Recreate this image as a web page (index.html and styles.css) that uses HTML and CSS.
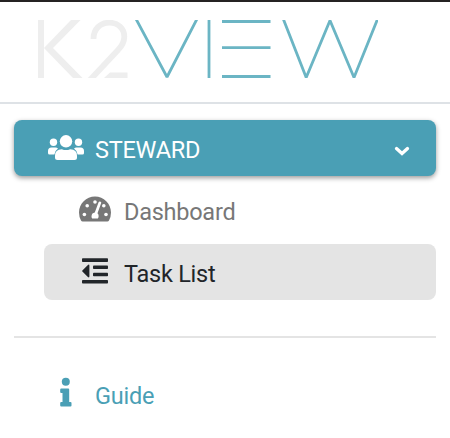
FILE: index.html
```html
<!DOCTYPE html>
<html lang="en">
<head>
<meta charset="utf-8">
<title>K2View</title>
<link rel="stylesheet" href="styles.css">
</head>
<body>
<header class="brand">
  <svg class="logo" viewBox="38 20 340 58" role="img" aria-label="K2View">
    <g fill="#eee">
      <path d="M38 20h6v58h-6z"/>
      <path d="M71 20h9.500L53 48 82.500 78h-9.500L44 48z"/>
      <path d="M110 72.500h17.500v5.500H104z"/>
    </g>
    <path d="M93.500 39C93.500 29 100 22.700 109.500 22.700C118 22.700 124.300 28.500 124.300 36.500C124.300 43 121.500 46.500 118 50L90 80" fill="none" stroke="#eee" stroke-width="5.800"/>
    <g fill="none" stroke="#6bb5c4" stroke-width="2.800">
      <path d="M135.500 18L167 77L197.500 18M209 20v58M222 21.500h48.500M222 47.700h48.500M222 76.500h48.500M282.900 18L306.200 77.500L330 20.500L354 77.500L378 18" stroke-linejoin="bevel"/>
    </g>
  </svg>
</header>
<nav class="menu">
  <a class="item group">
    <svg class="icon users" viewBox="0 0 36 26" fill="currentColor">
      <circle cx="5.500" cy="7.300" r="3.700"/><circle cx="30.500" cy="7.300" r="3.700"/><circle cx="18" cy="6.300" r="6.200"/>
      <path d="M3.500 12.500h4q1.500 0 2.500 1q-3 2-3.600 6H1.500Q0 19.500 0 18v-2q0-3.500 3.500-3.500zM32.500 12.500h-4q-1.500 0-2.500 1q3 2 3.600 6h4.900q1.500 0 1.500-1.500v-2q0-3.500-3.500-3.500z"/>
      <path d="M13.800 14.200q4.200 1.700 8.400 0q6.800 0 6.800 6.500v1.800q0 2.500-2.500 2.500h-17Q7 25 7 22.500v-1.800q0-6.500 6.800-6.500z"/>
    </svg>
    <span class="label">STEWARD</span>
    <svg class="chevron" viewBox="0 0 16 10"><path d="M2.500 2.500L8 7.500l5.500-5" fill="none" stroke="currentColor" stroke-width="3.300" stroke-linecap="round"/></svg>
  </a>
  <a class="item sub">
    <svg class="icon gauge" viewBox="0 0 32 26">
      <path d="M16 .4C7.200.4 0 7.500 0 16.400q0 4.300 2 8q.5 1 1.700 1h24.600q1.200 0 1.700-1q2-3.700 2-8C32 7.500 24.800.4 16 .4z" fill="currentColor"/>
      <g fill="#fff"><circle cx="5.400" cy="18.500" r="1.800"/><circle cx="8.200" cy="9.700" r="1.800"/><circle cx="16" cy="6" r="1.800"/><circle cx="24.800" cy="9.700" r="1.800"/><circle cx="27" cy="18.500" r="1.800"/><path d="M19.600 6.300q.8-1.300 2-.6q.9.400.6 1.200L18.500 17.300q1.500 1.300 1.100 3.500q-.2 1-.8 1.600h-5.600q-.8-1-.7-2.200q.3-3.200 3.300-3.600z"/></g>
    </svg>
    <span class="label">Dashboard</span>
  </a>
  <a class="item sub active">
    <svg class="icon outdent" viewBox="0 0 26 26" fill="currentColor">
      <rect y=".3" width="26" height="3.700" rx=".8"/><rect x="11" y="7.600" width="15" height="3.400" rx=".8"/><rect x="11" y="14.700" width="15" height="3.500" rx=".8"/><rect y="22" width="26" height="3.500" rx=".8"/>
      <path d="M.4 12.400L5.900 6.900Q7.400 6 7.400 7.700v10.600q0 1.800-1.500.8L.4 13.600q-.6-.6 0-1.200z"/>
    </svg>
    <span class="label">Task List</span>
  </a>
  <hr class="divider">
  <a class="item guide">
    <svg class="icon info" viewBox="0 0 12 30" fill="currentColor"><circle cx="5.800" cy="4.800" r="4"/><path d="M1.200 11.500h7q1 0 1 1V25h1.300q1 0 1 1v2.500q0 1-1 1h-9.300q-1 0-1-1V26q0-1 1-1h1.300v-9H1.200q-1 0-1-1v-2.500q0-1 1-1z"/></svg>
    <span class="label">Guide</span>
  </a>
</nav>
</body>
</html>
```

FILE: styles.css
```css
* { box-sizing: border-box; }
body {
  margin: 0;
  background: #fff;
  color: #212529;
  font-family: Roboto, "Liberation Sans", sans-serif;
  font-size: 23.500px;
  letter-spacing: -0.25px;
}
.brand {
  height: 104px;
  padding: 18px 38px;
  border-top: 2px solid #252323;
  border-bottom: 2px solid #dee2e6;
}
.logo { display: block; width: 340px; height: 58px; }
.menu { padding: 16px 14px 0; }
.item {
  display: flex;
  align-items: center;
  height: 56px;
  border-radius: 8px;
}
.label { line-height: 28px; padding-top: 4px; white-space: nowrap; }
.icon { flex: none; }
.group {
  padding: 0 26px 0 34px;
  background: #4a9fb5;
  color: #fff;
  box-shadow: 0 2px 5px rgba(0, 0, 0, .4);
}
.users { width: 36px; height: 26px; margin-right: 11px; margin-top: -1px; }
.chevron { width: 16px; height: 10px; margin: 6px 0 0 auto; }
.sub { margin: 6px 0 0 30px; padding-left: 35px; color: #777; }
.gauge { width: 32px; height: 26px; margin-right: 13px; margin-top: -2px; }
.active { padding-left: 38px; background: #e4e4e4; color: #212529; }
.outdent { width: 26px; height: 26px; margin-right: 16px; margin-top: -2px; }
.divider { height: 2px; margin: 36px 0 28px; border: 0; background: #e4e4e4; }
.guide { padding-left: 46px; color: #4a9fb5; }
.info { width: 12px; height: 30px; margin-right: 23px; margin-top: -5px; }
```
